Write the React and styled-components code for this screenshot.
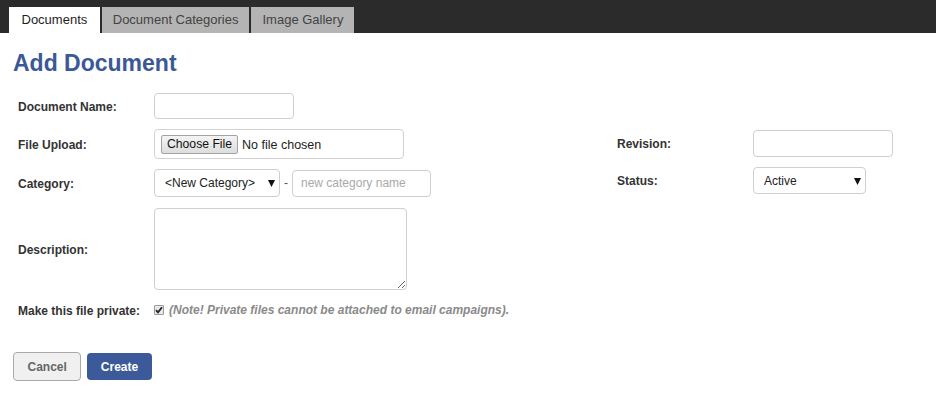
import React from "react";
import styled, { createGlobalStyle } from "styled-components";

const GlobalStyle = createGlobalStyle`
  html, body { margin: 0; padding: 0; background: #fff; }
  body { font-family: "Liberation Sans", Arial, sans-serif; color: #333; }
  * { box-sizing: border-box; }
`;

const TabBar = styled.nav`
  display: flex;
  align-items: flex-end;
  gap: 2px;
  height: 33px;
  padding-left: 9px;
  background: #2b2b2b;
`;

const Tab = styled.div`
  height: 26px;
  line-height: 26px;
  padding: 0 ${(p) => (p.$active ? "12.5px" : "11px")};
  font-size: 13px;
  background: ${(p) => (p.$active ? "#fff" : "#b4b4b4")};
  color: ${(p) => (p.$active ? "#1e1e1e" : "#434343")};
  white-space: nowrap;
`;

const Page = styled.main`
  padding: 0 13px;
`;

const Title = styled.h1`
  margin: 17px 0 0;
  font-size: 23px;
  line-height: 26px;
  font-weight: bold;
  color: #3b5897;
`;

const FormArea = styled.div`
  display: flex;
  align-items: flex-start;
  margin-top: 12px;
`;

const Column = styled.div`
  width: ${(p) => p.$width || "auto"};
  margin-top: ${(p) => p.$offset || "0px"};
  display: flex;
  flex-direction: column;
`;

const Row = styled.div`
  display: flex;
  align-items: center;
  padding: ${(p) => p.$padTop || 5}px 0 5px;
  min-height: ${(p) => p.$minH || 0}px;
`;

const Label = styled.label`
  width: 141px;
  flex: none;
  padding-left: 5px;
  padding-top: 1px;
  font-size: 12px;
  font-weight: bold;
  color: #333;
`;

const TextInput = styled.input`
  width: ${(p) => p.$w}px;
  height: ${(p) => p.$h || 26}px;
  border: 1px solid #cfcfcf;
  border-radius: 4px;
  padding: 0 8px;
  font-family: "Liberation Sans", Arial, sans-serif;
  font-size: 12px;
  color: #333;
  outline: none;
  &::placeholder { color: #a9a9a9; }
`;

const FileBox = styled.div`
  width: 250px;
  height: 30px;
  border: 1px solid #d2d2d2;
  border-radius: 4px;
  padding: 0 6px;
  display: flex;
  align-items: center;
`;

const FileInput = styled.input`
  width: 100%;
  font-family: "Liberation Sans", Arial, sans-serif;
  font-size: 12.5px;
  color: #222;
  &::file-selector-button {
    height: 19px;
    margin: 0 4px 0 0;
    padding: 0 5px;
    border: 1px solid #a3a3a3;
    border-radius: 2px;
    background: linear-gradient(#f4f4f4, #dddddd);
    font-family: "Liberation Sans", Arial, sans-serif;
    font-size: 12.2px;
    color: #111;
  }
`;

const SelectWrap = styled.div`
  position: relative;
  display: inline-flex;
`;

const Select = styled.select`
  appearance: none;
  -webkit-appearance: none;
  width: ${(p) => p.$w}px;
  height: ${(p) => p.$h || 28}px;
  border: 1px solid #cfcfcf;
  border-radius: 4px;
  background: #fff;
  padding: 0 20px 0 10px;
  font-family: "Liberation Sans", Arial, sans-serif;
  font-size: 12px;
  color: #222;
  outline: none;
`;

const Arrow = styled.svg`
  position: absolute;
  right: 5px;
  top: 50%;
  transform: translateY(-50%);
  pointer-events: none;
`;

const Dash = styled.span`
  margin: 0 4px;
  font-size: 12px;
  color: #555;
`;

const TextArea = styled.textarea`
  width: 253px;
  height: 82px;
  border: 1px solid #cfcfcf;
  border-radius: 4px;
  font-family: "Liberation Sans", Arial, sans-serif;
  font-size: 12px;
  outline: none;
  resize: both;
`;

const CheckBox = styled.span`
  width: 10px;
  height: 10px;
  flex: none;
  display: inline-flex;
  align-items: center;
  justify-content: center;
  border: 1px solid #9a9a9a;
  border-radius: 1px;
  background: #e9e9e9;
`;

const Note = styled.span`
  margin-left: 5px;
  font-size: 12px;
  font-weight: bold;
  font-style: italic;
  color: #8a8a8a;
`;

const Actions = styled.div`
  display: flex;
  align-items: center;
  gap: 6px;
  margin-top: 27px;
`;

const Button = styled.button`
  height: ${(p) => (p.$primary ? "27px" : "29px")};
  padding: 0 ${(p) => (p.$primary ? "13.5px" : "13.5px")};
  border: ${(p) => (p.$primary ? "none" : "1px solid #a9a9a9")};
  border-radius: 4px;
  background: ${(p) => (p.$primary ? "#3c5a9a" : "#f0f0f0")};
  color: ${(p) => (p.$primary ? "#fff" : "#666")};
  font-family: "Liberation Sans", Arial, sans-serif;
  font-size: 12px;
  font-weight: bold;
  cursor: pointer;
`;

const DownArrow = () => (
  <Arrow width="7" height="8" viewBox="0 0 7 8">
    <polygon points="0,1 7,1 3.5,8" fill="#111" />
  </Arrow>
);

export default function App() {
  return (
    <>
      <GlobalStyle />
      <TabBar>
        <Tab $active>Documents</Tab>
        <Tab>Document Categories</Tab>
        <Tab>Image Gallery</Tab>
      </TabBar>
      <Page>
        <Title>Add Document</Title>
        <FormArea>
          <Column $width="599px">
            <Row>
              <Label>Document Name:</Label>
              <TextInput $w={140} $h={26} />
            </Row>
            <Row>
              <Label>File Upload:</Label>
              <FileBox>
                <FileInput type="file" />
              </FileBox>
            </Row>
            <Row>
              <Label>Category:</Label>
              <SelectWrap>
                <Select $w={126} $h={28} defaultValue="new">
                  <option value="new">&lt;New Category&gt;</option>
                </Select>
                <DownArrow />
              </SelectWrap>
              <Dash>-</Dash>
              <TextInput $w={139} $h={27} placeholder="new category name" />
            </Row>
            <Row $padTop={6}>
              <Label>Description:</Label>
              <TextArea />
            </Row>
            <Row $minH={30}>
              <Label>Make this file private:</Label>
              <CheckBox>
                <svg width="8" height="8" viewBox="0 0 8 8">
                  <path d="M1 4.2 L3 6.3 L7 1.2" stroke="#222" strokeWidth="1.8" fill="none" />
                </svg>
              </CheckBox>
              <Note>(Note! Private files cannot be attached to email campaigns).</Note>
            </Row>
          </Column>
          <Column $offset="37px">
            <Row>
              <Label>Revision:</Label>
              <TextInput $w={140} $h={27} />
            </Row>
            <Row>
              <Label>Status:</Label>
              <SelectWrap>
                <Select $w={113} $h={27} defaultValue="active">
                  <option value="active">Active</option>
                </Select>
                <DownArrow />
              </SelectWrap>
            </Row>
          </Column>
        </FormArea>
        <Actions>
          <Button>Cancel</Button>
          <Button $primary>Create</Button>
        </Actions>
      </Page>
    </>
  );
}
